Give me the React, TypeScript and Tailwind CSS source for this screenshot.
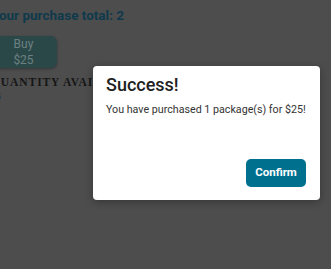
export default function App() {
  const total = 2;

  return (
    <div className="relative min-h-screen w-full overflow-hidden bg-[#4d4d4d] font-['Roboto',sans-serif]">
      {/* page behind the dimmed backdrop */}
      <div className="-ml-[9px] pt-[5px]">
        <h2 className="text-[13.5px] leading-[20px] font-bold text-[#0f3a4c]">
          Your purchase total: {total}
        </h2>
        <button className="mt-[11px] ml-[-1px] flex w-[67px] h-[32px] flex-col items-center justify-center rounded-[6px] bg-[#2b4849] text-[12px] leading-[16px] text-[#6b8080] shadow-[0_1px_3px_rgba(0,0,0,0.3)]">
          <span>Buy</span>
          <span>$25</span>
        </button>
        <p className="mt-[7px] font-['Liberation_Serif',serif] text-[11.5px] leading-[14px] font-bold tracking-[0.08em] text-[#161616] uppercase whitespace-nowrap">
          Quantity Available
        </p>
        <p className="ml-[4px] font-['Liberation_Serif',serif] text-[11.5px] leading-[14px] font-bold text-[#161616]">
          3
        </p>
      </div>

      {/* modal */}
      <div className="absolute left-[93px] top-[66px] flex w-[227px] h-[134px] flex-col rounded-[4px] bg-white pl-[13px] pr-[14px] pt-[8px] pb-[13px] shadow-[0_2px_8px_rgba(0,0,0,0.3)]">
        <h1 className="text-[18px] leading-[22px] font-medium text-[#212121]">Success!</h1>
        <p className="mt-[7px] text-[10.7px] leading-[14px] text-[#333333] whitespace-nowrap">
          You have purchased 1 package(s) for $25!
        </p>
        <div className="mt-auto flex justify-end">
          <button className="h-[28px] w-[60px] rounded-[5px] bg-[#00708f] text-[11.5px] font-bold text-white">
            Confirm
          </button>
        </div>
      </div>
    </div>
  );
}
